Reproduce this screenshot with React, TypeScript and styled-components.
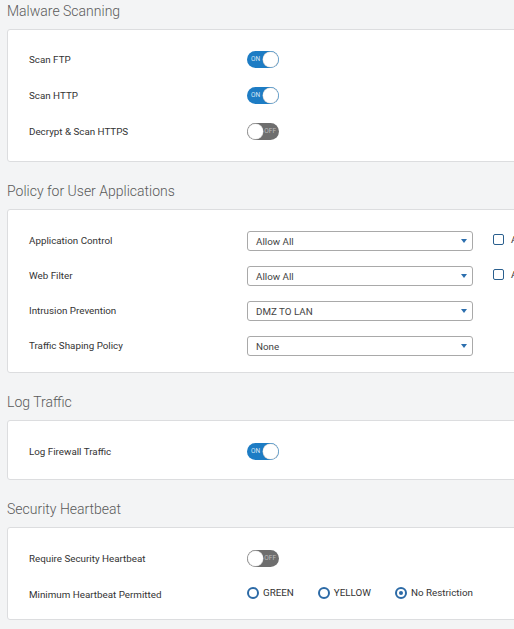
import React from "react";
import styled, { createGlobalStyle } from "styled-components";

const Global = createGlobalStyle`
  html, body { margin: 0; padding: 0; overflow: hidden; background: #f3f4f5; }
  body { font-family: Roboto, "Liberation Sans", Arial, sans-serif; }
`;

const Page = styled.div`
  width: 720px;
  padding: 2px 0 0 7px;
  display: flex;
  flex-direction: column;
  gap: 20px;
`;

const Section = styled.section`
  display: flex;
  flex-direction: column;
  gap: 9px;
`;

const Title = styled.h2`
  margin: 0;
  font-size: 14px;
  line-height: 18px;
  font-weight: 300;
  color: #5a5a5a;
`;

const Card = styled.div<{ $pt: number; $pb: number }>`
  background: #fff;
  border: 1px solid #dcdddf;
  border-radius: 3px;
  padding: ${(p) => p.$pt}px 0 ${(p) => p.$pb}px 21px;
`;

const Row = styled.div<{ $h: number }>`
  display: grid;
  grid-template-columns: 218px 226px auto;
  align-items: center;
  height: ${(p) => p.$h}px;
`;

const Label = styled.div`
  font-size: 9.8px;
  color: #333;
`;

const ToggleBox = styled.div<{ $on: boolean }>`
  position: relative;
  width: 32px;
  height: 17px;
  border-radius: 9px;
  background: ${(p) => (p.$on ? "#1d7cc4" : "#6e6e6e")};
  box-sizing: border-box;
`;

const ToggleText = styled.span<{ $on: boolean }>`
  position: absolute;
  top: 0;
  ${(p) => (p.$on ? "left: 4px;" : "right: 3px;")}
  line-height: 17px;
  font-size: 6.5px;
  color: ${(p) => (p.$on ? "#d8e8f6" : "#bdbdbd")};
`;

const Knob = styled.span<{ $on: boolean }>`
  position: absolute;
  top: 1px;
  ${(p) => (p.$on ? "right: 1px;" : "left: 1px;")}
  width: 15px;
  height: 15px;
  border-radius: 50%;
  background: #fff;
  box-shadow: 0 0 0 0.5px #c8c8c8;
`;

const Toggle = ({ on }: { on: boolean }) => (
  <ToggleBox $on={on}>
    <ToggleText $on={on}>{on ? "ON" : "OFF"}</ToggleText>
    <Knob $on={on} />
  </ToggleBox>
);

const SelectBox = styled.div`
  position: relative;
  height: 20px;
  border: 1px solid #a9a9a9;
  border-radius: 3px;
  box-sizing: border-box;
  padding-left: 8px;
  font-size: 9.8px;
  line-height: 19px;
  color: #444;
`;

const Arrow = styled.span`
  position: absolute;
  right: 5px;
  top: 7px;
  width: 0;
  height: 0;
  border-left: 3px solid transparent;
  border-right: 3px solid transparent;
  border-top: 4px solid #2c6fae;
`;

const Select = ({ value }: { value: string }) => (
  <SelectBox>
    {value}
    <Arrow />
  </SelectBox>
);

const CheckWrap = styled.div`
  display: flex;
  align-items: center;
  gap: 7px;
  margin-left: 20px;
  font-size: 9.8px;
  color: #333;
  white-space: nowrap;
  margin-top: -3px;
`;

const Box = styled.span`
  width: 11px;
  height: 11px;
  box-sizing: border-box;
  border: 1.5px solid #2a5f8e;
  border-radius: 2px;
`;

const Radios = styled.div`
  display: flex;
  align-items: center;
  gap: 24px;
  margin-top: -3px;
`;

const RadioItem = styled.div`
  display: flex;
  align-items: center;
  gap: 4px;
  font-size: 9.8px;
  color: #333;
  white-space: nowrap;
`;

const Circle = styled.span<{ $checked: boolean }>`
  width: 12px;
  height: 12px;
  box-sizing: border-box;
  border: 2px solid #2c6aa6;
  border-radius: 50%;
  display: flex;
  align-items: center;
  justify-content: center;
  &::after {
    content: "";
    display: ${(p) => (p.$checked ? "block" : "none")};
    width: 4px;
    height: 4px;
    border-radius: 50%;
    background: #2c6aa6;
  }
`;

export default function App() {
  return (
    <>
      <Global />
      <Page>
        <Section>
          <Title>Malware Scanning</Title>
          <Card $pt={11} $pb={12}>
            <Row $h={36}>
              <Label>Scan FTP</Label>
              <Toggle on />
            </Row>
            <Row $h={36}>
              <Label>Scan HTTP</Label>
              <Toggle on />
            </Row>
            <Row $h={36}>
              <Label>Decrypt &amp; Scan HTTPS</Label>
              <Toggle on={false} />
            </Row>
          </Card>
        </Section>

        <Section>
          <Title>Policy for User Applications</Title>
          <Card $pt={13} $pb={9}>
            <Row $h={35}>
              <Label>Application Control</Label>
              <Select value="Allow All" />
              <CheckWrap>
                <Box />
                Apply application-based traffic shaping policy
              </CheckWrap>
            </Row>
            <Row $h={35}>
              <Label>Web Filter</Label>
              <Select value="Allow All" />
              <CheckWrap>
                <Box />
                Apply web category-based traffic shaping policy
              </CheckWrap>
            </Row>
            <Row $h={35}>
              <Label>Intrusion Prevention</Label>
              <Select value="DMZ TO LAN" />
            </Row>
            <Row $h={35}>
              <Label>Traffic Shaping Policy</Label>
              <Select value="None" />
            </Row>
          </Card>
        </Section>

        <Section>
          <Title>Log Traffic</Title>
          <Card $pt={12} $pb={10}>
            <Row $h={36}>
              <Label>Log Firewall Traffic</Label>
              <Toggle on />
            </Row>
          </Card>
        </Section>

        <Section>
          <Title>Security Heartbeat</Title>
          <Card $pt={12} $pb={7}>
            <Row $h={36}>
              <Label>Require Security Heartbeat</Label>
              <Toggle on={false} />
            </Row>
            <Row $h={36}>
              <Label>Minimum Heartbeat Permitted</Label>
              <Radios>
                <RadioItem>
                  <Circle $checked={false} />
                  GREEN
                </RadioItem>
                <RadioItem>
                  <Circle $checked={false} />
                  YELLOW
                </RadioItem>
                <RadioItem>
                  <Circle $checked />
                  No Restriction
                </RadioItem>
              </Radios>
            </Row>
          </Card>
        </Section>
      </Page>
    </>
  );
}
